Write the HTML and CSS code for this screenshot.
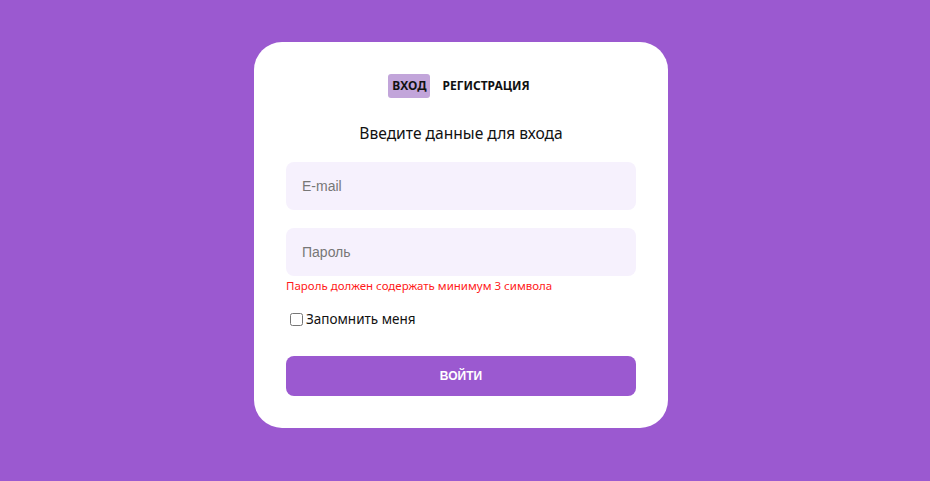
FILE: index.html
```html
<!DOCTYPE html>
<html lang="ru">
<head>
<meta charset="utf-8">
<link rel="stylesheet" href="styles.css">
</head>
<body>
<div class="page">
  <div class="card">
    <div class="tabs">
      <span class="tab tab-active">ВХОД</span>
      <span class="tab">РЕГИСТРАЦИЯ</span>
    </div>
    <h1 class="title">Введите данные для входа</h1>
    <input class="field" type="text" placeholder="E-mail">
    <input class="field field-second" type="password" placeholder="Пароль">
    <div class="error">Пароль должен содержать минимум 3 символа</div>
    <label class="remember"><input type="checkbox" class="check"><span>Запомнить меня</span></label>
    <button class="submit">ВОЙТИ</button>
  </div>
</div>
</body>
</html>
```
FILE: styles.css
```css
html, body { margin: 0; padding: 0; }
body {
  background: #9b59d0;
  font-family: "Noto Sans", "DejaVu Sans", sans-serif;
}
.page {
  display: flex;
  justify-content: center;
  padding: 42px 8px 0 0;
  min-height: 481px;
  box-sizing: border-box;
}
.card {
  width: 414px;
  box-sizing: border-box;
  background: #fff;
  border-radius: 28px;
  padding: 32px 32px 32px;
  display: flex;
  flex-direction: column;
  height: 386px;
}
.tabs {
  display: flex;
  justify-content: center;
  gap: 8px;
  height: 24px;
}
.tab {
  font-size: 12px;
  font-weight: 700;
  color: #111;
  padding: 0 4px;
  line-height: 24px;
  border-radius: 3px;
}
.tab-active { background: #c2a5da; }
.title {
  margin: 24px 0 0;
  font-size: 15.6px;
  font-weight: 400;
  text-align: center;
  color: #111;
  line-height: 22px;
  height: 22px;
}
.field {
  margin-top: 18px;
  height: 48px;
  border: none;
  border-radius: 8px;
  background: #f6f1fd;
  padding: 0 16px;
  font-family: "Liberation Sans", Arial, sans-serif;
  font-size: 14px;
  outline: none;
  box-sizing: border-box;
  width: 100%;
}
.field::placeholder { color: #777; }
.field-second { margin-top: 18px; }
.error {
  margin-top: 3px;
  font-size: 11.5px;
  color: #ff1a1a;
  line-height: 14px;
}
.remember {
  margin-top: 17px;
  display: flex;
  align-items: center;
  font-size: 13.5px;
  color: #111;
  line-height: 18px;
}
.check {
  margin: 0 3px 0 4px;
  width: 13px;
  height: 13px;
}
.submit {
  margin-top: 28px;
  height: 40px;
  border: none;
  border-radius: 8px;
  background: #9b59d0;
  color: #fff;
  font-family: "Liberation Sans", Arial, sans-serif;
  font-weight: 700;
  font-size: 12px;
  width: 100%;
}
```
